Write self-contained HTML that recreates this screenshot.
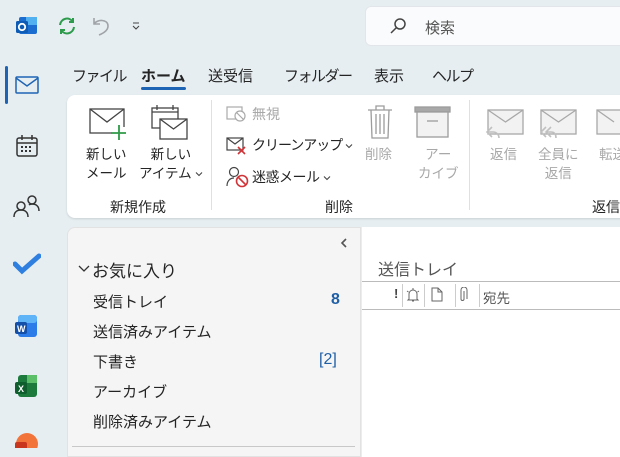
<!DOCTYPE html>
<html><head><meta charset="utf-8"><style>
*{margin:0;padding:0;box-sizing:border-box}
body{width:620px;height:448px;overflow:hidden;background:#e6eef2;font-family:"Liberation Sans","Noto Sans CJK JP",sans-serif;color:#242424;position:relative}
.a{position:absolute;white-space:nowrap}
.tab{font-size:15px;top:65px}
.k{letter-spacing:-1.5px}
.rl{font-size:13.5px;text-align:center;line-height:19px}
.g{color:#a8a8a8}
.f{font-size:15px;left:93px}
.cv{display:inline-block;width:8px;height:6px;vertical-align:middle;margin-left:3px}
</style></head><body>
<svg width="0" height="0" style="position:absolute"><defs><symbol id="cv" viewBox="0 0 8 6"><path d="M1 1.5l3 3 3-3" fill="none" stroke="#444" stroke-width="1.1"/></symbol></defs></svg>
<!-- top bar -->
<svg class="a" style="left:14px;top:14px" width="26" height="24"><rect x="5" y="3" width="18" height="17" rx="2" fill="#1c6dd0"/><rect x="12" y="3" width="11" height="8" fill="#50b0f0"/><rect x="2" y="7" width="12" height="12" rx="1.5" fill="#0d5bb5"/><circle cx="8" cy="13" r="3.2" fill="none" stroke="#fff" stroke-width="1.8"/></svg>
<svg class="a" style="left:56px;top:15px" width="22" height="22" fill="none" stroke="#2d9b4b" stroke-width="2"><path d="M4 10a7 7 0 0 1 13-3M18 12a7 7 0 0 1-13 3"/><path d="M17 3v4h-4M5 19v-4h4"/></svg>
<svg class="a" style="left:90px;top:14px" width="22" height="22" fill="none" stroke="#a0a4a8" stroke-width="1.6"><path d="M4 4v6h6M4 10c3-5 14-5 14 2c0 4-4 7-9 9"/></svg>
<svg class="a" style="left:131px;top:22px" width="10" height="10" fill="none" stroke="#444" stroke-width="1.1"><path d="M2 1h6M2 4l3 3 3-3"/></svg>
<div class="a" style="left:365px;top:6px;width:270px;height:40px;background:#fafbfc;border-radius:6px;border:1px solid #e2e6ea"></div>
<svg class="a" style="left:388px;top:17px" width="20" height="20" fill="none" stroke="#444" stroke-width="1.5"><circle cx="12" cy="7" r="5"/><path d="M8.5 10.5L3 16"/></svg>
<div class="a" style="left:425px;top:17px;font-size:15px;color:#555">検索</div>
<!-- left rail -->
<div class="a" style="left:5px;top:66px;width:3px;height:38px;background:#1e64b4;border-radius:2px"></div>
<svg class="a" style="left:15px;top:75px" width="24" height="20" fill="none" stroke="#1e64b4" stroke-width="1.5"><rect x="1" y="2" width="22" height="16" rx="1"/><path d="M1 3l11 8 11-8"/></svg>
<svg class="a" style="left:15px;top:134px" width="24" height="24" fill="none" stroke="#333" stroke-width="1.5"><rect x="2" y="4" width="20" height="18" rx="2"/><path d="M2 9h20M7 1v5M17 1v5"/><g fill="#333" stroke="none"><rect x="6" y="12" width="2" height="2"/><rect x="10" y="12" width="2" height="2"/><rect x="14" y="12" width="2" height="2"/><rect x="6" y="16" width="2" height="2"/><rect x="10" y="16" width="2" height="2"/><rect x="14" y="16" width="2" height="2"/></g></svg>
<svg class="a" style="left:13px;top:193px" width="28" height="26" fill="none" stroke="#333" stroke-width="1.5"><circle cx="8" cy="13" r="4"/><path d="M1 24c0-5 3-7 7-7s7 2 7 7"/><circle cx="19" cy="7" r="4"/><path d="M16 12c1-1 2-1 3-1 4 0 7 2 7 7"/></svg>
<svg class="a" style="left:13px;top:253px" width="28" height="22"><path d="M2 11l7 7L26 3" fill="none" stroke="#2f7fe0" stroke-width="5" stroke-linecap="round"/></svg>
<svg class="a" style="left:13px;top:313px" width="26" height="26"><rect x="5" y="2" width="19" height="22" rx="3" fill="#2b7ce9"/><rect x="5" y="2" width="19" height="8" rx="3" fill="#5fb3f7"/><rect x="2" y="9" width="12" height="12" rx="2" fill="#1450a8"/><text x="4" y="19" font-size="9" font-weight="bold" fill="#fff" font-family="Liberation Sans">W</text></svg>
<svg class="a" style="left:13px;top:373px" width="26" height="26"><rect x="5" y="2" width="19" height="22" rx="3" fill="#1d7a3d"/><rect x="14" y="2" width="10" height="8" fill="#5bbf6a"/><rect x="2" y="9" width="12" height="12" rx="2" fill="#0f5e2e"/><text x="5" y="19" font-size="9" font-weight="bold" fill="#fff" font-family="Liberation Sans">X</text></svg>
<svg class="a" style="left:13px;top:432px" width="26" height="16"><circle cx="14" cy="12" r="11" fill="#f2743a"/><rect x="2" y="10" width="12" height="12" rx="2" fill="#c8361d"/></svg>
<!-- tabs -->
<div class="a tab k" style="left:72px">ファイル</div>
<div class="a tab" style="left:141px;font-weight:bold">ホーム</div>
<div class="a" style="left:141px;top:87px;width:45px;height:3px;background:#1e64b4;border-radius:2px"></div>
<div class="a tab" style="left:208px">送受信</div>
<div class="a tab k" style="left:284px">フォルダー</div>
<div class="a tab" style="left:374px">表示</div>
<div class="a tab k" style="left:432px">ヘルプ</div>
<!-- ribbon -->
<div class="a" style="left:67px;top:95px;width:570px;height:123px;background:#fff;border-radius:8px;box-shadow:0 1px 2px rgba(0,0,0,.12)"></div>
<svg class="a" style="left:89px;top:107px" width="42" height="34" fill="none" stroke="#444" stroke-width="1.3"><rect x="1" y="2" width="34" height="24"/><path d="M1 2l17 13 17-13"/><rect x="23" y="20" width="14" height="12" fill="#fff" stroke="none"/><path d="M30 18v15M22 26h15" stroke="#2e9a48" stroke-width="1.8"/></svg>
<svg class="a" style="left:150px;top:104px" width="40" height="38" fill="none" stroke="#444" stroke-width="1.3"><rect x="2" y="4" width="26" height="20"/><path d="M2 8h26M7 1v5M23 1v5"/><rect x="10" y="15" width="27" height="20" fill="#fff"/><path d="M10 15l13.5 10 13.5-10"/></svg>
<div class="a rl" style="left:86px;top:145px">新しい<br>メール</div>
<div class="a rl" style="left:139px;top:145px">新しい<br>アイテム<svg class="cv"><use href="#cv"/></svg></div>
<div class="a" style="left:110px;top:197px;font-size:14px">新規作成</div>
<div class="a" style="left:211px;top:100px;width:1px;height:110px;background:#e0e0e0"></div>
<svg class="a" style="left:226px;top:105px" width="22" height="18" fill="none" stroke="#aaa" stroke-width="1.2"><rect x="1" y="2" width="15" height="12"/><circle cx="14" cy="11" r="5" fill="#fff"/><path d="M10.5 7.5l7 7"/></svg>
<div class="a g" style="left:252px;top:104px;font-size:14px">無視</div>
<svg class="a" style="left:226px;top:136px" width="22" height="20" fill="none" stroke="#444" stroke-width="1.2"><rect x="1" y="2" width="16" height="12"/><path d="M1 2l8 6 8-6"/><path d="M12 11l7 7M19 11l-7 7" stroke="#d13438" stroke-width="1.6"/></svg>
<div class="a k" style="left:252px;top:135px;font-size:14px;letter-spacing:-1px">クリーンアップ<svg class="cv"><use href="#cv"/></svg></div>
<svg class="a" style="left:226px;top:166px" width="24" height="22" fill="none" stroke="#444" stroke-width="1.2"><circle cx="8" cy="6" r="4.5"/><path d="M1 20c0-5 3-8 7-8"/><circle cx="16" cy="15" r="5.5" stroke="#d13438" stroke-width="1.6"/><path d="M12 11l8 8" stroke="#d13438" stroke-width="1.6"/></svg>
<div class="a" style="left:252px;top:167px;font-size:14px;letter-spacing:-0.5px">迷惑メール<svg class="cv"><use href="#cv"/></svg></div>
<svg class="a" style="left:365px;top:104px" width="30" height="36" fill="none" stroke="#9c9c9c" stroke-width="1.3"><path d="M3 6h24M11 6V2h8v4M6 6l1 28h16l1-28M11 10v20M15 10v20M19 10v20"/></svg>
<div class="a rl g" style="left:365px;top:145px">削除</div>
<svg class="a" style="left:414px;top:106px" width="38" height="32" fill="none" stroke="#9c9c9c" stroke-width="1.3"><rect x="1" y="1" width="35" height="5" fill="#a8a8a8"/><rect x="3" y="6" width="31" height="25" fill="#f2f2f2"/><path d="M13 15h11"/></svg>
<div class="a rl g" style="left:418px;top:145px">アー<br>カイブ</div>
<div class="a" style="left:325px;top:197px;font-size:14px">削除</div>
<div class="a" style="left:469px;top:100px;width:1px;height:110px;background:#e0e0e0"></div>
<svg class="a" style="left:485px;top:108px" width="40" height="36" fill="none" stroke="#a8a8a8" stroke-width="1.3"><rect x="3" y="2" width="35" height="24" fill="#f2f2f2"/><path d="M3 2l17.5 12 17.5-12"/><path d="M7 19l-5 5 5 5M2 24h6c4 0 6 3 6 6" stroke="#c0c0c0" stroke-width="1.6" fill="none"/></svg>
<div class="a rl g" style="left:490px;top:145px">返信</div>
<svg class="a" style="left:538px;top:108px" width="40" height="36" fill="none" stroke="#a8a8a8" stroke-width="1.3"><rect x="3" y="2" width="35" height="24" fill="#f2f2f2"/><path d="M3 2l17.5 12 17.5-12"/><path d="M8 19l-5 5 5 5M13 19l-5 5 5 5M9 24h4c4 0 5 3 5 6" stroke="#c0c0c0" stroke-width="1.6" fill="none"/></svg>
<div class="a rl g" style="left:538px;top:145px">全員に<br>返信</div>
<svg class="a" style="left:595px;top:108px" width="30" height="30" fill="none" stroke="#a8a8a8" stroke-width="1.3"><rect x="2" y="2" width="35" height="24" fill="#f2f2f2"/><path d="M2 2l17 12"/></svg>
<div class="a rl g" style="left:599px;top:145px">転送</div>
<div class="a" style="left:592px;top:197px;font-size:14px">返信</div>
<!-- folder pane -->
<div class="a" style="left:67px;top:227px;width:294px;height:230px;background:#f5f5f5;border-radius:8px 0 0 0;border:1px solid #e2e2e2"></div>
<svg class="a" style="left:340px;top:238px" width="8" height="10" fill="none" stroke="#555" stroke-width="1.6"><path d="M6 1L2 5l4 4"/></svg>
<svg class="a" style="left:78px;top:265px" width="12" height="8" fill="none" stroke="#333" stroke-width="1.3"><path d="M1 1l5 5 5-5"/></svg>
<div class="a" style="left:92px;top:257px;font-size:17px">お気に入り</div>
<div class="a f" style="top:291px">受信トレイ</div>
<div class="a" style="left:331px;top:291px;font-size:16px;font-weight:bold;color:#1f5fa6">8</div>
<div class="a f" style="top:321px">送信済みアイテム</div>
<div class="a f" style="top:351px">下書き</div>
<div class="a" style="left:319px;top:351px;font-size:16px;color:#1f5fa6">[2]</div>
<div class="a f" style="top:381px">アーカイブ</div>
<div class="a f" style="top:411px">削除済みアイテム</div>
<div class="a" style="left:72px;top:446px;width:283px;height:1px;background:#c8c8c8"></div>
<!-- message list -->
<div class="a" style="left:362px;top:227px;width:260px;height:230px;background:#fff"></div>
<div class="a" style="left:378px;top:256px;font-size:16px;color:#555">送信トレイ</div>
<div class="a" style="left:362px;top:281px;width:260px;height:1px;background:#bbb"></div>
<div class="a" style="left:362px;top:309px;width:260px;height:1px;background:#bbb"></div>
<div class="a" style="left:394px;top:286px;font-size:13px;font-weight:bold;color:#444">!</div>
<div class="a" style="left:402px;top:284px;width:1px;height:23px;background:#ccc"></div>
<svg class="a" style="left:406px;top:287px" width="14" height="16" fill="none" stroke="#666" stroke-width="1"><path d="M3 12V7a4 4 0 0 1 8 0v5l1 1H2zM6 14h2M7 1v2M1 4l1.5 1M13 4l-1.5 1"/></svg>
<div class="a" style="left:424px;top:284px;width:1px;height:23px;background:#ccc"></div>
<svg class="a" style="left:431px;top:287px" width="12" height="15" fill="none" stroke="#666" stroke-width="1"><path d="M1 1h6l4 4v9H1zM7 1v4h4"/></svg>
<div class="a" style="left:455px;top:284px;width:1px;height:23px;background:#ccc"></div>
<svg class="a" style="left:458px;top:287px" width="10" height="16" fill="none" stroke="#666" stroke-width="1"><path d="M6 4v8a1.5 1.5 0 0 1-3 0V3a3 3 0 0 1 6 0v9"/></svg>
<div class="a" style="left:479px;top:284px;width:1px;height:23px;background:#ccc"></div>
<div class="a" style="left:483px;top:287px;font-size:13.5px;color:#555">宛先</div>
</body></html>
